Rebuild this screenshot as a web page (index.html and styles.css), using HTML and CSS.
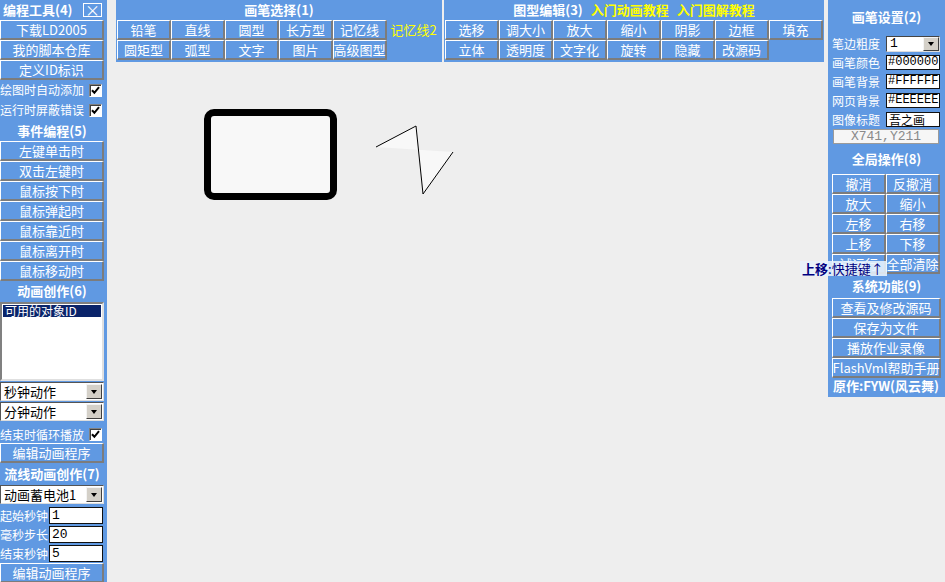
FILE: index.html
```html
<!DOCTYPE html>
<html lang="zh-CN">
<head>
<meta charset="utf-8">
<title>吾之画</title>
<link rel="stylesheet" href="styles.css">
</head>
<body>
<div class="app">
  <aside class="left">
    <div class="lhead top"><span>编程工具(4)</span><span class="close">×</span></div>
    <div class="lbtn">下载LD2005</div>
    <div class="lbtn">我的脚本仓库</div>
    <div class="lbtn">定义ID标识</div>
    <div class="lcheck"><span>绘图时自动添加</span><span class="cb"><svg width="9" height="9" viewBox="0 0 9 9"><path d="M1 4.2 L3.4 6.8 L8 1.2" fill="none" stroke="#000" stroke-width="2"/></svg></span></div>
    <div class="lcheck"><span>运行时屏蔽错误</span><span class="cb"><svg width="9" height="9" viewBox="0 0 9 9"><path d="M1 4.2 L3.4 6.8 L8 1.2" fill="none" stroke="#000" stroke-width="2"/></svg></span></div>
    <div class="lhead tall">事件编程(5)</div>
    <div class="lbtn">左键单击时</div>
    <div class="lbtn">双击左键时</div>
    <div class="lbtn">鼠标按下时</div>
    <div class="lbtn">鼠标弹起时</div>
    <div class="lbtn">鼠标靠近时</div>
    <div class="lbtn">鼠标离开时</div>
    <div class="lbtn">鼠标移动时</div>
    <div class="lhead">动画创作(6)</div>
    <div class="listbox"><div class="opt">可用的对象ID</div></div>
    <div class="select"><span>秒钟动作</span><span class="dd"></span></div>
    <div class="select"><span>分钟动作</span><span class="dd"></span></div>
    <div class="lcheck loop"><span>结束时循环播放</span><span class="cb"><svg width="9" height="9" viewBox="0 0 9 9"><path d="M1 4.2 L3.4 6.8 L8 1.2" fill="none" stroke="#000" stroke-width="2"/></svg></span></div>
    <div class="lbtn">编辑动画程序</div>
    <div class="lhead tall">流线动画创作(7)</div>
    <div class="select"><span>动画蓄电池1</span><span class="dd"></span></div>
    <div class="field first"><span>起始秒钟</span><span class="inp">1</span></div>
    <div class="field"><span>毫秒步长</span><span class="inp">20</span></div>
    <div class="field"><span>结束秒钟</span><span class="inp">5</span></div>
    <div class="lbtn">编辑动画程序</div>
  </aside>

  <main class="stage">
    <svg class="canvas" viewBox="107 0 721 582" width="721" height="582">
      <rect x="207.5" y="112.5" width="126" height="84" rx="6.5" ry="6.5" fill="#f8f8f8" stroke="#000" stroke-width="7"/>
      <polyline points="376,147 416,126 423,194 453,152" fill="#f8f8f8" stroke="#000" stroke-width="1"/>
    </svg>
    <div class="toolbars">
      <section class="panel">
        <div class="phead"><b>画笔选择(1)</b></div>
        <div class="pgrid six">
          <div class="tbtn">铅笔</div>
          <div class="tbtn">直线</div>
          <div class="tbtn">圆型</div>
          <div class="tbtn">长方型</div>
          <div class="tbtn">记忆线</div>
          <div class="tbtn hl">记忆线2</div>
          <div class="tbtn">圆矩型</div>
          <div class="tbtn">弧型</div>
          <div class="tbtn">文字</div>
          <div class="tbtn">图片</div>
          <div class="tbtn">高级图型</div>
          <div class="tbtn empty"></div>
        </div>
      </section>
      <section class="panel">
        <div class="phead"><b>图型编辑(3)</b><b class="link">入门动画教程</b><b class="link">入门图解教程</b></div>
        <div class="pgrid seven">
          <div class="tbtn">选移</div>
          <div class="tbtn">调大小</div>
          <div class="tbtn">放大</div>
          <div class="tbtn">缩小</div>
          <div class="tbtn">阴影</div>
          <div class="tbtn">边框</div>
          <div class="tbtn">填充</div>
          <div class="tbtn">立体</div>
          <div class="tbtn">透明度</div>
          <div class="tbtn">文字化</div>
          <div class="tbtn">旋转</div>
          <div class="tbtn">隐藏</div>
          <div class="tbtn">改源码</div>
          <div class="tbtn empty"></div>
        </div>
      </section>
    </div>
  </main>

  <aside class="right">
    <div class="rhead first">画笔设置(2)</div>
    <div class="rrow"><span>笔边粗度</span><span class="rsel"><span>1</span><span class="dd"></span></span></div>
    <div class="rrow"><span>画笔颜色</span><span class="rinp">#000000</span></div>
    <div class="rrow"><span>画笔背景</span><span class="rinp">#FFFFFF</span></div>
    <div class="rrow"><span>网页背景</span><span class="rinp">#EEEEEE</span></div>
    <div class="rrow"><span>图像标题</span><span class="rinp cjk">吾之画</span></div>
    <div class="coord">X741,Y211</div>
    <div class="rhead second">全局操作(8)</div>
    <div class="rgrid">
      <div class="tbtn">撤消</div>
      <div class="tbtn">反撤消</div>
      <div class="tbtn">放大</div>
      <div class="tbtn">缩小</div>
      <div class="tbtn">左移</div>
      <div class="tbtn">右移</div>
      <div class="tbtn">上移</div>
      <div class="tbtn">下移</div>
      <div class="tbtn">试运行</div>
      <div class="tbtn">全部清除</div>
    </div>
    <div class="rhead third">系统功能(9)</div>
    <div class="tbtn wide">查看及修改源码</div>
    <div class="tbtn wide">保存为文件</div>
    <div class="tbtn wide">播放作业录像</div>
    <div class="tbtn wide">FlashVml帮助手册</div>
    <div class="credit">原作:FYW(风云舞)</div>
  </aside>

  <div class="tip"><b>上移</b>:快捷键↑</div>
</div>
</body>
</html>
```

FILE: styles.css
```css
html, body {
  margin: 0;
  padding: 0;
  background: #eeeeee;
}
body {
  font-family: "Noto Sans CJK SC", "Liberation Sans", sans-serif;
  color: #fff;
  font-size: 13px;
}
.app {
  position: relative;
  display: flex;
  width: 945px;
  height: 582px;
  overflow: hidden;
}

/* ---------- left panel ---------- */
.left {
  width: 107px;
  flex: none;
  height: 582px;
  background: #6099e2;
  display: flex;
  flex-direction: column;
}
.lhead {
  height: 20px;
  width: 104px;
  display: flex;
  align-items: center;
  justify-content: center;
  font-weight: bold;
  font-size: 13px;
  line-height: 16px;
  flex: none;
}
.lhead.tall { height: 21px; }
.lhead.top {
  justify-content: space-between;
  padding-left: 3px;
  box-sizing: border-box;
  width: 107px;
}
.close {
  width: 19px;
  height: 14px;
  box-sizing: border-box;
  border: 1px solid #fff;
  display: flex;
  align-items: center;
  justify-content: center;
  font-weight: normal;
  font-size: 15px;
  line-height: 12px;
  margin-right: 5px;
}
.lbtn, .tbtn {
  box-sizing: border-box;
  border-style: solid;
  border-width: 1px 2px 2px 1px;
  border-color: #ffffff #7c7c7c #7c7c7c #ffffff;
  display: flex;
  align-items: center;
  justify-content: center;
  font-size: 13px;
  line-height: 16px;
  white-space: nowrap;
  color: #fff;
}
.lbtn {
  width: 104px;
  height: 20px;
  flex: none;
}
.lcheck {
  height: 20px;
  width: 104px;
  display: flex;
  align-items: center;
  justify-content: space-between;
  font-size: 12px;
  line-height: 14px;
  flex: none;
  white-space: nowrap;
}
.lcheck.loop {
  height: 22px;
  padding-top: 5px;
  box-sizing: border-box;
}
.cb {
  width: 13px;
  height: 13px;
  box-sizing: border-box;
  background: #fff;
  border: 1px solid;
  border-color: #808080 #ffffff #ffffff #808080;
  box-shadow: inset 1px 1px 0 #404040;
  display: flex;
  align-items: center;
  justify-content: center;
  margin-right: 2px;
}
.listbox {
  margin-top: 1px;
  width: 104px;
  height: 79px;
  box-sizing: border-box;
  background: #fff;
  border: 2px solid;
  border-color: #808080 #e0e0e0 #e0e0e0 #808080;
  padding: 1px;
  flex: none;
}
.opt {
  background: #0a246a;
  color: #fff;
  font-size: 12px;
  line-height: 12px;
  height: 12px;
  padding-left: 2px;
}
.select {
  margin-top: 1px;
  width: 104px;
  height: 19px;
  box-sizing: border-box;
  background: #fff;
  border: 1px solid;
  border-color: #555 #ddd #ddd #555;
  display: flex;
  align-items: center;
  justify-content: space-between;
  color: #000;
  font-size: 13px;
  line-height: 15px;
  padding-left: 3px;
  flex: none;
}
.dd {
  width: 16px;
  height: 15px;
  box-sizing: border-box;
  background: #d4d0c8;
  border: 1px solid;
  border-color: #f4f4f4 #404040 #404040 #f4f4f4;
  display: flex;
  align-items: center;
  justify-content: center;
  margin-right: 1px;
}
.dd::after {
  content: "";
  border-top: 4px solid #000;
  border-left: 3.5px solid transparent;
  border-right: 3.5px solid transparent;
}
.field {
  height: 19px;
  width: 103px;
  display: flex;
  align-items: center;
  justify-content: space-between;
  font-size: 12px;
  line-height: 14px;
  flex: none;
}
.field.first { margin-top: 2px; }
.inp {
  width: 54px;
  height: 17px;
  box-sizing: border-box;
  background: #fff;
  border: 1px solid #111;
  color: #000;
  font-family: "Liberation Mono", monospace;
  font-size: 13px;
  line-height: 15px;
  padding-left: 2px;
}

/* ---------- stage & toolbars ---------- */
.stage {
  position: relative;
  width: 721px;
  flex: none;
  height: 582px;
}
.canvas {
  position: absolute;
  left: 0;
  top: 0;
}
.toolbars {
  position: relative;
  display: flex;
  gap: 2px;
  margin-left: 9px;
}
.panel {
  background: #6099e2;
  padding: 0 1px 2px;
}
.phead {
  height: 20px;
  display: flex;
  align-items: center;
  justify-content: center;
  gap: 8px;
  font-size: 13px;
  line-height: 16px;
}
.phead .link { color: #ffff00; }
.pgrid {
  display: grid;
  grid-auto-rows: 20px;
}
.pgrid.six { grid-template-columns: repeat(6, 54px); }
.pgrid.seven { grid-template-columns: repeat(7, 54px); }
.tbtn.hl {
  color: #ffff00;
  border-color: transparent;
}
.tbtn.empty { border-color: transparent; }

/* ---------- right panel ---------- */
.right {
  width: 117px;
  flex: none;
  height: 397px;
  box-sizing: border-box;
  background: #6099e2;
  padding: 0 5px 0 4px;
  display: flex;
  flex-direction: column;
}
.rhead {
  display: flex;
  align-items: center;
  justify-content: center;
  font-weight: bold;
  font-size: 13px;
  line-height: 16px;
  flex: none;
  margin-right: -1px;
}
.rhead.first { height: 34px; }
.rhead.second { height: 30px; }
.rhead.third { height: 24px; }
.rrow {
  height: 19px;
  display: flex;
  align-items: center;
  justify-content: space-between;
  font-size: 12px;
  line-height: 14px;
  flex: none;
}
.rinp, .rsel {
  width: 54px;
  height: 15px;
  box-sizing: border-box;
  background: #fff;
  border: 1px solid #111;
  color: #000;
  font-family: "Liberation Mono", monospace;
  font-size: 12px;
  line-height: 13px;
  padding-left: 1px;
  white-space: nowrap;
  overflow: hidden;
}
.rinp.cjk {
  font-family: "Noto Sans CJK SC", sans-serif;
  font-size: 12px;
  line-height: 13px;
  padding-left: 2px;
}
.rsel {
  display: flex;
  align-items: center;
  justify-content: space-between;
  height: 16px;
  border-color: #444 #ddd #ddd #444;
  padding-left: 3px;
  font-size: 13px;
}
.rsel .dd { height: 14px; margin-right: 0; }
.coord {
  margin: 0 0 0 1px;
  width: 106px;
  height: 15px;
  box-sizing: border-box;
  background: #f6f6f6;
  border: 1px solid #9a9a9a;
  color: #8a8a8a;
  font-family: "Liberation Mono", monospace;
  font-size: 13px;
  line-height: 13px;
  text-align: center;
  flex: none;
}
.rgrid {
  display: grid;
  grid-template-columns: 54px 54px;
  grid-auto-rows: 20px;
}
.tbtn.wide {
  width: 109px;
  height: 20px;
  flex: none;
}
.credit {
  height: 16px;
  font-weight: bold;
  font-size: 13px;
  line-height: 16px;
  white-space: nowrap;
  margin-left: 1px;
}

/* ---------- tooltip ---------- */
.tip {
  position: absolute;
  left: 800px;
  top: 261px;
  height: 15px;
  padding: 0 3px 0 2px;
  background: rgba(232, 242, 252, 0.88);
  color: #000080;
  font-size: 13px;
  line-height: 15px;
  white-space: nowrap;
}
```
